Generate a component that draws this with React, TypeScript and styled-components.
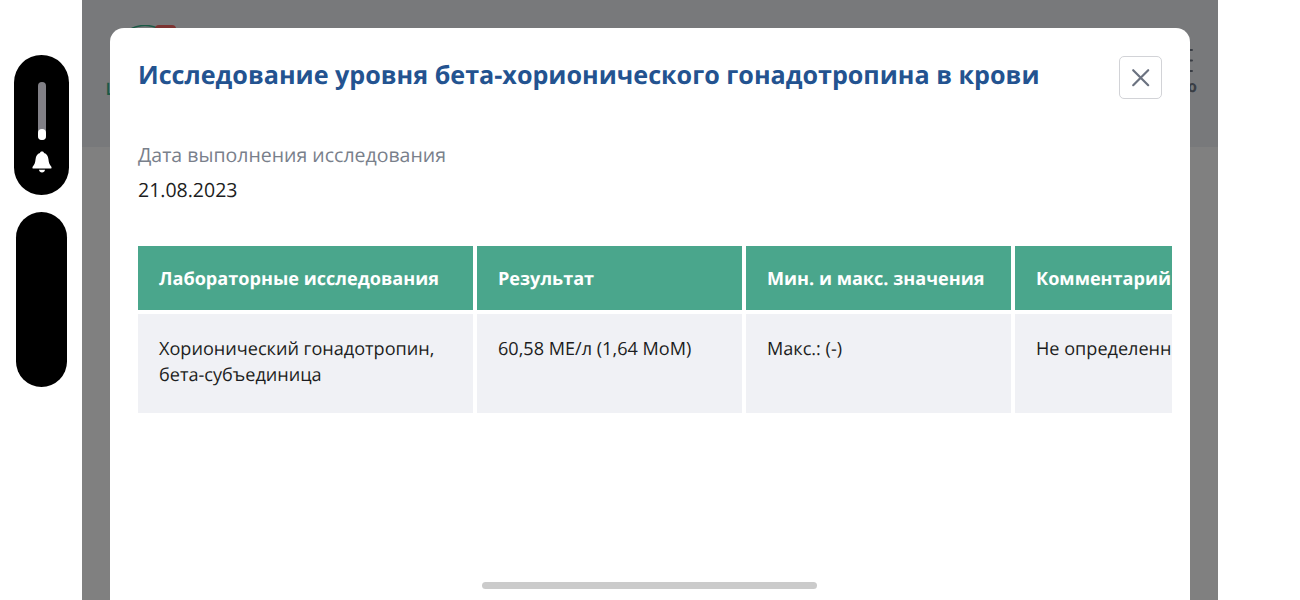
import React, { FunctionComponent } from "react";
import styled, { createGlobalStyle, ThemeProvider } from "styled-components";

const theme = {
  colors: {
    title: "#235390",
    green: "#4aa68c",
    cell: "#f0f1f5",
    muted: "#79808b",
    text: "#1c1d21"
  },
  font: '"Open Sans", "Noto Sans", sans-serif'
};

const GlobalStyle = createGlobalStyle`
  * {
    box-sizing: border-box;
  }
  body {
    margin: 0;
    background: #fff;
    overflow: hidden;
    text-rendering: geometricPrecision;
  }
`;

const Device = styled.div`
  display: flex;
  width: 1300px;
  height: 600px;
  font-family: ${props => props.theme.font};
  color: ${props => props.theme.colors.text};
`;

const Sidebar = styled.div`
  display: flex;
  flex-direction: column;
  gap: 17px;
  width: 82px;
  padding-top: 55px;
`;

const VolumePill = styled.div`
  display: flex;
  flex-direction: column;
  align-items: center;
  width: 55px;
  height: 140px;
  margin-left: 14px;
  padding-top: 27px;
  border-radius: 28px;
  background: #000;
`;

const VolumeTrack = styled.div`
  display: flex;
  align-items: flex-end;
  width: 8px;
  height: 58px;
  margin-bottom: 11px;
  border-radius: 4px;
  background: #818086;
`;

const VolumeLevel = styled.div`
  width: 8px;
  height: 11px;
  border-radius: 4px;
  background: #fff;
`;

const CameraPill = styled.div`
  width: 51px;
  height: 175px;
  margin-left: 16px;
  border-radius: 26px;
  background: #000;
`;

const Screen = styled.div`
  position: relative;
  width: 1136px;
  height: 600px;
  overflow: hidden;
  background: #808080;
`;

const PageHeader = styled.div`
  display: flex;
  justify-content: space-between;
  height: 147px;
  padding: 25px 21px 0 23.5px;
  background: #78797b;
`;

const Brand = styled.div`
  display: flex;
  flex-direction: column;
  color: #1a5945;
  font-size: 17px;
  font-weight: 600;
  line-height: 24px;
  gap: 28px;
`;

const MenuButton = styled.div`
  display: flex;
  flex-direction: column;
  align-items: flex-end;
  padding-top: 23px;
  color: #3a3e45;
  font-size: 16px;
  font-weight: 700;
  line-height: 20px;

  svg {
    margin: 0 3px 3px 0;
  }
`;

const Modal = styled.div`
  position: absolute;
  top: 28px;
  left: 28px;
  width: 1080px;
  height: 600px;
  padding: 28px 18px 0 28px;
  border-radius: 14px 14px 0 0;
  background: #fff;
`;

const ModalHeader = styled.div`
  display: flex;
  align-items: flex-start;
  justify-content: space-between;
  height: 85px;
  padding-right: 10px;
`;

const Title = styled.h1`
  margin: 0;
  color: ${props => props.theme.colors.title};
  font-size: 25.15px;
  line-height: 38px;
  white-space: nowrap;
`;

const CloseButton = styled.button`
  display: flex;
  align-items: center;
  justify-content: center;
  width: 43px;
  height: 43px;
  padding: 0;
  border: 1px solid #d2d3d7;
  border-radius: 5px;
  background: #fff;
`;

const Label = styled.div`
  color: ${props => props.theme.colors.muted};
  font-size: 19.5px;
  line-height: 28px;
`;

const DateValue = styled.div`
  margin-top: 7px;
  font-size: 19.5px;
  line-height: 28px;
`;

const TableScroll = styled.div`
  margin-top: 42px;
  overflow: hidden;
`;

const Table = styled.div`
  display: grid;
  grid-template-columns: 335px 265px 265px 265px;
  grid-template-rows: 64px 99px;
  gap: 4px;
  width: 1142px;
`;

const HeadCell = styled.div`
  display: flex;
  align-items: center;
  padding: 2px 21px 0;
  background: ${props => props.theme.colors.green};
  color: #fff;
  font-size: 18.1px;
  font-weight: 700;
  white-space: nowrap;
`;

const Cell = styled.div`
  padding: 22px 21px;
  background: ${props => props.theme.colors.cell};
  font-size: 18.1px;
  line-height: 26px;
  white-space: pre-line;
`;

const HomeIndicator = styled.div`
  position: absolute;
  bottom: 11px;
  left: 400px;
  width: 335px;
  height: 7px;
  border-radius: 4px;
  background: #cbcbcb;
`;

const columns = [
  "Лабораторные исследования",
  "Результат",
  "Мин. и макс. значения",
  "Комментарий"
];

const row = [
  "Хорионический гонадотропин, бета-субъединица",
  "60,58 МЕ/л (1,64 МоМ)",
  "Макс.: (-)",
  "Не определенн"
];

const BellIcon: FunctionComponent = () => (
  <svg width="20" height="22" viewBox="0 0 20 22" fill="#fff">
    <path d="M10 .5C9 .5 8.300 1 8 1.900C5.300 2.700 3.900 5 3.600 8C3.200 12 2.500 13.600.8 15.500C.2 16.300.3 17.600 1.300 17.600H18.700C19.700 17.600 19.800 16.300 19.200 15.500C17.500 13.600 16.800 12 16.400 8C16.100 5 14.700 2.700 12 1.900C11.700 1 11 .5 10 .5Z" />
    <path d="M7 18.700H13C12.700 20.400 11.600 21.400 10 21.400C8.400 21.400 7.300 20.400 7 18.700Z" />
  </svg>
);

const Logo: FunctionComponent = () => (
  <svg width="90" height="24" viewBox="0 0 90 24" fill="none">
    <ellipse cx="39" cy="10" rx="18" ry="9.500" stroke="#1a5945" strokeWidth="1.500" />
    <rect x="49" y="0" width="21" height="20" rx="4" fill="#7c3331" />
  </svg>
);

const MenuIcon: FunctionComponent = () => (
  <svg width="28" height="25" viewBox="0 0 28 25" stroke="#3a3e45" strokeWidth="2" strokeLinecap="round">
    <path d="M1 2H26M1 12.500H26M1 23H26" />
  </svg>
);

const CloseIcon: FunctionComponent = () => (
  <svg width="20" height="20" viewBox="0 0 20 20" stroke="#6b7280" strokeWidth="2.200" strokeLinecap="round">
    <path d="M2.200 2.200L17.200 17.200M17.200 2.200L2.200 17.200" />
  </svg>
);

const ResultsTable: FunctionComponent = () => (
  <TableScroll>
    <Table>
      {columns.map(column => (
        <HeadCell key={column}>{column}</HeadCell>
      ))}
      {row.map(value => (
        <Cell key={value}>{value}</Cell>
      ))}
    </Table>
  </TableScroll>
);

const App: FunctionComponent = () => (
  <ThemeProvider theme={theme}>
    <GlobalStyle />
    <Device>
      <Sidebar>
        <VolumePill>
          <VolumeTrack>
            <VolumeLevel />
          </VolumeTrack>
          <BellIcon />
        </VolumePill>
        <CameraPill />
      </Sidebar>
      <Screen>
        <PageHeader>
          <Brand>
            <Logo />
            <div>Ц</div>
          </Brand>
          <MenuButton>
            <MenuIcon />
            Меню
          </MenuButton>
        </PageHeader>
        <Modal>
          <ModalHeader>
            <Title>Исследование уровня бета-хорионического гонадотропина в крови</Title>
            <CloseButton aria-label="Закрыть">
              <CloseIcon />
            </CloseButton>
          </ModalHeader>
          <Label>Дата выполнения исследования</Label>
          <DateValue>21.08.2023</DateValue>
          <ResultsTable />
        </Modal>
        <HomeIndicator />
      </Screen>
    </Device>
  </ThemeProvider>
);

export default App;
